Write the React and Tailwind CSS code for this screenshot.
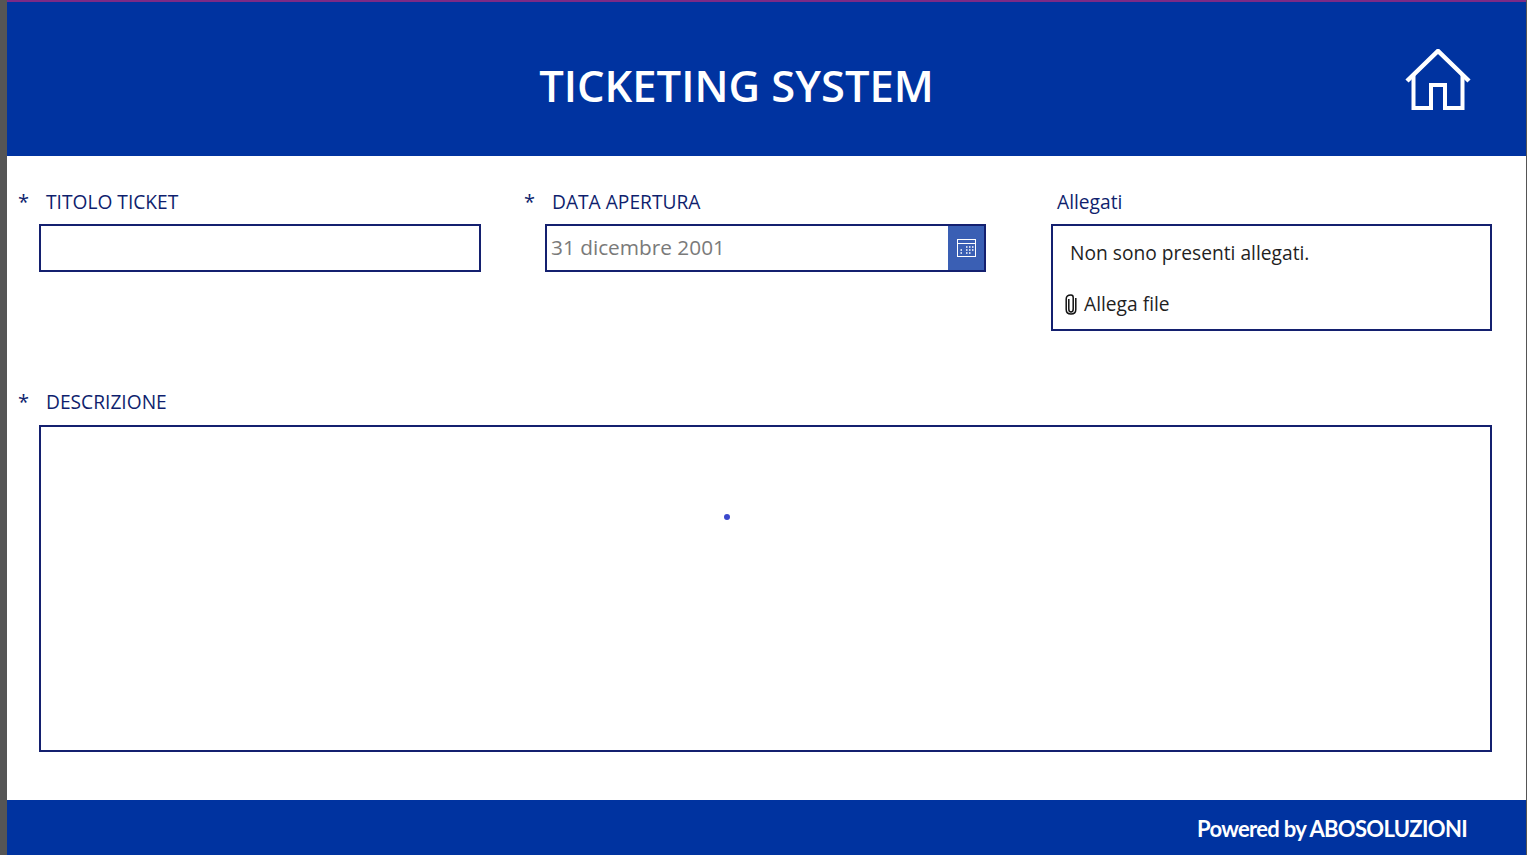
import React from 'react';

const font = { fontFamily: '"Open Sans", sans-serif' };

function HomeIcon() {
  return (
    <svg width="66" height="62" viewBox="0 0 66 62" fill="none" stroke="white" strokeWidth="4" strokeLinecap="butt">
      <path d="M2 32 L33 2 L64 32" strokeWidth="4.5" />
      <path d="M8.5 26 V59 H26 V36 H40 V59 H57.5 V26" />
    </svg>
  );
}

function CalendarIcon() {
  return (
    <svg width="19" height="18" viewBox="0 0 19 18" fill="none" stroke="white">
      <rect x="0.5" y="0.5" width="18" height="17" strokeWidth="1" />
      <path d="M0.5 4.5 H18.5" strokeWidth="1" />
      <path d="M9 8h1.5M12 8h1.5M15 8h1.5M3.5 11h1.5M9 11h1.5M12 11h1.5M15 11h1.5M3.5 14h1.5M9 14h1.5M12 14h1.5" strokeWidth="1.5" />
    </svg>
  );
}

function ClipIcon() {
  return (
    <svg width="12" height="22" viewBox="0 0 12 22" fill="none" stroke="#111" strokeWidth="1.5">
      <path d="M3.8 6 V16 C3.8 18 4.6 19 6 19 C7.4 19 8.2 18 8.2 16 V4.5 C8.2 3 7.5 2 6 2 C3.5 2 1.2 3 1.2 6 V16.5 C1.2 19.5 3 21 6 21 C9 21 10.8 19.5 10.8 16.5 V5" />
    </svg>
  );
}

function Label({ required, children }) {
  return (
    <div className="h-[48px] flex items-start pt-[33px] text-[19.2px] leading-[26px] text-[#0f1f6e]">
      {required && <span className="w-[27px] -ml-[21px] text-[20px]">*</span>}
      <span className={required ? 'ml-[1px]' : 'ml-[6px]'}>{children}</span>
    </div>
  );
}

export default function App() {
  return (
    <div className="w-[1527px] h-[855px] overflow-hidden flex bg-white relative" style={font}>
      <div className="w-[7px] shrink-0 bg-[#555555]" />
      <div className="flex-1 flex flex-col min-w-0">
        <div className="h-[2px] bg-[#7c2a86]" />
        <header className="h-[154px] bg-[#0033a0] flex items-center relative justify-center">
          <h1 className="text-[43.5px] leading-[60px] font-semibold text-white pr-[60px] mt-[13px]">TICKETING SYSTEM</h1>
          <div className="absolute right-[55px] top-[47px]">
            <HomeIcon />
          </div>
        </header>

        <main className="flex-1 pl-[32px] pr-[34px] relative">
          <div className="grid grid-cols-[442px_442px_441px] gap-x-[64px]">
            <div>
              <Label required>TITOLO TICKET</Label>
              <div className="h-[48px] mt-[20px] border-2 border-[#14206f]" />
            </div>
            <div>
              <Label required>DATA APERTURA</Label>
              <div className="h-[48px] mt-[20px] mr-[1px] border-2 border-[#14206f] flex">
                <div className="flex-1 pl-[4px] text-[20.8px] leading-[43px] text-[#7a7a7a]">31 dicembre 2001</div>
                <div className="w-[36px] pl-[1px] bg-[#3a5fb4] flex items-center justify-center">
                  <CalendarIcon />
                </div>
              </div>
            </div>
            <div>
              <Label>Allegati</Label>
              <div className="h-[107px] mt-[20px] border-2 border-[#14206f] text-[#1f1f1f] text-[19.2px]">
                <div className="pl-[17px] pt-[14px] leading-[26px]">Non sono presenti allegati.</div>
                <div className="flex items-center gap-[7px] pl-[12px] mt-[25px] leading-[26px]">
                  <ClipIcon />
                  <span>Allega file</span>
                </div>
              </div>
            </div>
          </div>

          <div className="mt-[25px]">
            <Label required>DESCRIZIONE</Label>
            <div className="h-[327px] mt-[21px] border-2 border-[#14206f]" />
          </div>

          <div className="absolute left-[717px] top-[358px] w-[6px] h-[6px] rounded-full bg-[#3b48cc]" />
        </main>

        <footer className="h-[55px] bg-[#0033a0] flex items-center justify-end pr-[59px] pt-[2px]">
          <span className="text-[22px] font-bold text-white tracking-[-0.69px]" style={{ fontFamily: 'Lato, sans-serif' }}>
            Powered by ABOSOLUZIONI
          </span>
        </footer>
      </div>
      <div className="w-[1px] shrink-0 bg-[#555555]" />
    </div>
  );
}
